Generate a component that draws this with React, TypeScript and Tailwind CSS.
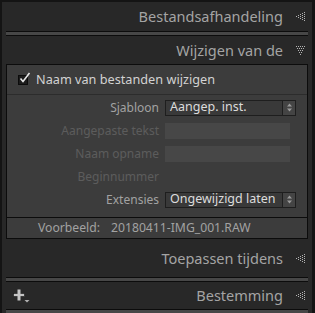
import React from "react";

const FONT = { fontFamily: '"Noto Sans", "Open Sans", Arial, sans-serif' };

function TriLeft() {
  // dotted left-pointing triangle
  const dots: [number, number][] = [];
  for (let c = 0; c < 5; c++) {
    for (let r = -c; r <= c; r += 2) dots.push([c * 2, 8 + r]);
  }
  return (
    <svg width="9" height="17" viewBox="0 0 9 17" className="shrink-0">
      {dots.map(([x, y], i) => (
        <rect key={i} x={x} y={y} width="1" height="1" fill="#b4b4b4" />
      ))}
    </svg>
  );
}

function TriDown() {
  const dots: [number, number][] = [];
  for (let r = 0; r < 5; r++) {
    const h = 4 - r;
    for (let c = -h; c <= h; c += 2) dots.push([4 + c, r * 2]);
  }
  return (
    <svg width="9" height="9" viewBox="0 0 9 9" className="shrink-0">
      {dots.map(([x, y], i) => (
        <rect key={i} x={x} y={y} width="1" height="1" fill="#b4b4b4" />
      ))}
    </svg>
  );
}

function Bar() {
  return <div className="mx-[4px] h-[5px] shrink-0 border-y border-[#0c0c0c] bg-[#474747]" />;
}

function Header({ title, open, plus, h = "h-[28px]" }: { title: string; open?: boolean; plus?: boolean; h?: string }) {
  return (
    <div className={`flex shrink-0 items-center pl-[11px] pr-[7px] ${h}`}>
      {plus && (
        <svg width="17" height="14" viewBox="0 0 17 14" className="shrink-0">
          <rect x="0.5" y="4.5" width="11" height="3" fill="#c4c4c4" stroke="#151515" strokeWidth="0.6" />
          <rect x="4.5" y="0.5" width="3" height="11" fill="#c4c4c4" />
          <path d="M11.5 11h5l-2.5 2.5z" fill="#b0b0b0" />
        </svg>
      )}
      <span className="ml-auto text-[14.5px] leading-none text-[#a4a4a4]">{title}</span>
      <span className="ml-[13px] flex w-[9px] justify-center">{open ? <TriDown /> : <TriLeft />}</span>
    </div>
  );
}

function Select({ value }: { value: string }) {
  return (
    <div className="flex h-[16px] w-[131px] items-center border border-[#1e1e1e] bg-[#393939]">
      <span className="flex-1 pl-[4px] text-[12.5px] leading-none text-[#dcdcdc]">{value}</span>
      <span className="flex h-full w-[13px] items-center justify-center border-l border-[#1e1e1e] bg-[#444]">
        <svg width="7" height="9" viewBox="0 0 7 9">
          <path d="M3.5 0.5L6 3.5H1z M3.5 8.5L6 5.5H1z" fill="#9a9a9a" />
        </svg>
      </span>
    </div>
  );
}

function Row({ label, dim, children }: { label: string; dim?: boolean; children?: React.ReactNode }) {
  return (
    <div className="flex h-[23px] items-center">
      <span className={`w-[152px] text-right text-[12px] leading-none ${dim ? "text-[#5c5c5c]" : "text-[#a2a2a2]"}`}>
        {label}
      </span>
      <div className="ml-[6px]">{children}</div>
    </div>
  );
}

function Field() {
  return <div className="h-[16px] w-[125px] bg-[#474747]" />;
}

export default function App() {
  return (
    <div
      className="flex h-[313px] w-[315px] flex-col overflow-hidden border-t-2 border-l-2 border-r-[3px] border-[#141414] bg-[#282828]"
      style={FONT}
    >
      <Header title="Bestandsafhandeling" h="h-[29px]" />
      <Bar />
      <Header title="Wijzigen van de" open />

      {/* rename panel */}
      <div className="mx-[4px] shrink-0 border border-[#0c0c0c] bg-[#3c3c3c]">
        <div className="flex h-[30px] items-center border-b border-[#2c2c2c] pl-[11px]">
          <span className="relative flex h-[10px] w-[10px] items-center justify-center border border-[#0c0c0c] bg-[#1c1c1c]">
            <svg width="12" height="12" viewBox="0 0 12 12" className="absolute -top-[4px] left-[0px]">
              <path d="M1.5 6.5L4 9.5L10.5 1" stroke="#e6e6e6" strokeWidth="1.6" fill="none" />
            </svg>
          </span>
          <span className="ml-[8px] text-[12.7px] leading-none text-[#d2d2d2]">Naam van bestanden wijzigen</span>
        </div>

        <div className="flex flex-col pb-[6px] pt-[1px]">
          <Row label="Sjabloon">
            <Select value="Aangep. inst." />
          </Row>
          <Row label="Aangepaste tekst" dim>
            <Field />
          </Row>
          <Row label="Naam opname" dim>
            <Field />
          </Row>
          <Row label="Beginnummer" dim />
          <Row label="Extensies">
            <Select value="Ongewijzigd laten" />
          </Row>
        </div>

        <div className="flex h-[21px] items-center border-t border-[#0c0c0c] pl-[31px] text-[12.2px] leading-none text-[#a2a2a2]">
          <span>Voorbeeld:</span>
          <span className="ml-[11px]">20180411-IMG_001.RAW</span>
        </div>
      </div>

      <Header title="Toepassen tijdens" h="h-[38px]" />
      <Bar />
      <Header title="Bestemming" plus h="h-[27px]" />
      <Bar />
    </div>
  );
}
